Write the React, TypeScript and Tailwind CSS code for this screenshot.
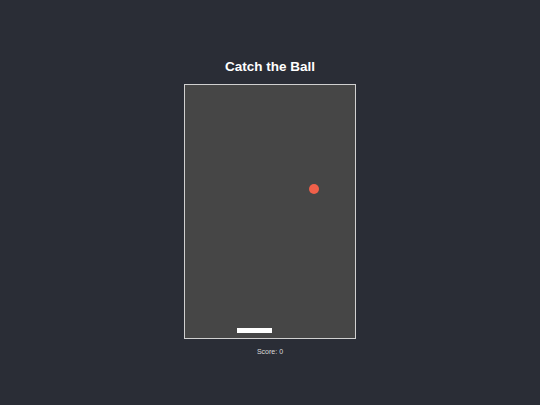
export default function App() {
  return (
    <div
      className="flex h-[405px] w-[540px] flex-col items-center bg-[#2a2d36] pt-[58px]"
      style={{ fontFamily: '"Liberation Sans", Arial, sans-serif' }}
    >
      <h1 className="text-[13.5px] font-bold leading-[18px] text-white">Catch the Ball</h1>

      {/* Spielfeld */}
      <div className="relative mt-[8px] h-[255px] w-[172px] border border-[#d0d0d0] bg-[#464646]">
        <div className="absolute left-[124px] top-[99px] h-[10px] w-[10px] rounded-full bg-[#f0604a]" />
        <div className="absolute left-[52px] top-[243px] h-[5px] w-[35px] bg-white" />
      </div>

      <p className="mt-[8px] text-[7px] leading-[10px] text-[#dcdcdc]">Score: 0</p>
    </div>
  )
}
